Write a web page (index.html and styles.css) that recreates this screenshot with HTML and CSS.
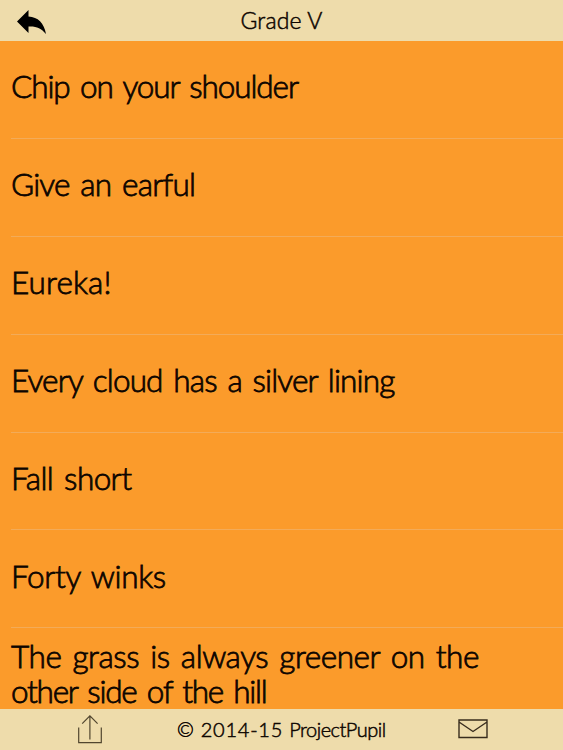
FILE: index.html
```html
<!DOCTYPE html>
<html lang="en">
<head>
<meta charset="utf-8">
<title>Grade V</title>
<link rel="stylesheet" href="styles.css">
</head>
<body>
<div class="app">
  <header class="bar header">
    <svg class="back" viewBox="0 0 30 25" width="30" height="25"><path d="M0 11.5 11.5 0v6.5C21 7 27 13 29 24 24 18 19 16 11.5 16.5V23Z"/></svg>
    <h1 class="title">Grade V</h1>
  </header>
  <main class="list">
    <div class="row"><span class="phrase chip">Chip on your shoulder</span></div>
    <div class="row"><span class="phrase give">Give an earful</span></div>
    <div class="row"><span class="phrase eureka">Eureka!</span></div>
    <div class="row"><span class="phrase cloud">Every cloud has a silver lining</span></div>
    <div class="row"><span class="phrase fall">Fall short</span></div>
    <div class="row"><span class="phrase forty">Forty winks</span></div>
    <div class="row"><div class="phrase"><span class="grass">The grass is always greener on the</span><br><span class="hill">other side of the hill</span></div></div>
  </main>
  <footer class="bar footer">
    <svg class="share" viewBox="0 0 24 29" width="24" height="29"><path d="M.7 12.5v15.2h22.6V12.5M11.9 24.5V1.2M4.2 8.7l7.7-7.8 7.7 7.8"/></svg>
    <span class="copyright"><span class="years">© 2014-15 </span><span class="owner">ProjectPupil</span></span>
    <svg class="mail" viewBox="0 0 30 20" width="30" height="20"><path d="M1 1h28v17.5H1ZM1 3l14 9.5L29 3"/></svg>
  </footer>
</div>
</body>
</html>
```
FILE: styles.css
```css
* { box-sizing: border-box; }
body { margin: 0; font-family: Lato, "Liberation Sans", sans-serif; font-weight: 300; color: #0d0500; }
.app { height: 750px; display: flex; flex-direction: column; overflow: hidden; background: #fb9b2b; }
.bar { background: #eedcab; flex: none; display: grid; align-items: center; }
.header { height: 41px; grid-template-columns: 1fr auto 1fr; }
.back { margin: 3px 0 0 17px; fill: #000; }
.title { margin: 0 0 2px; font-size: 23px; font-weight: 300; line-height: 30px; letter-spacing: .15px; -webkit-text-stroke: .5px; }
.list { flex: 1; min-height: 0; overflow: hidden; padding-left: 11px; }
.row { height: 97.9px; display: flex; align-items: center; border-bottom: 1px solid #f3ab58; padding-bottom: 5px; }
.phrase { font-size: 31.5px; line-height: 35px; white-space: nowrap; word-spacing: 3px; -webkit-text-stroke: .8px; }
.chip { letter-spacing: -1.1px; }
.give { letter-spacing: -.8px; }
.eureka { letter-spacing: .15px; }
.cloud { letter-spacing: -.85px; }
.fall { letter-spacing: -.6px; }
.forty { letter-spacing: -.35px; }
.grass { letter-spacing: -.45px; }
.hill { letter-spacing: -1.25px; }
.footer { height: 41px; grid-template-columns: 177px 210px 1fr; }
.share { margin-left: 78px; fill: none; stroke: #51462f; stroke-width: 1.2; }
.copyright { font-size: 20px; white-space: nowrap; -webkit-text-stroke: .5px; margin-bottom: 2px; }
.years { letter-spacing: .75px; }
.owner { letter-spacing: -.5px; }
.mail { margin: 0 0 1px 71px; fill: none; stroke: #382c1d; stroke-width: 1.4; }
```
